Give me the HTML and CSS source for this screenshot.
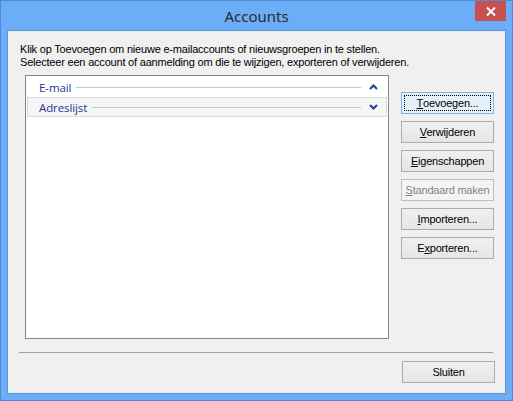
FILE: index.html
```html
<!DOCTYPE html>
<html lang="nl">
<head>
  <meta charset="UTF-8">
  <title>Accounts</title>
  <link rel="stylesheet" href="styles.css">
</head>
<body>
  <div class="window">
    <!-- title bar -->
    <div class="titlebar">
      <span></span>
      <span class="title">Accounts</span>
      <div class="close">
        <svg width="10" height="9" viewBox="0 0 10 9"><path d="M1 0.5 L9 8.5 M9 0.5 L1 8.5" stroke="#fff" stroke-width="2"/></svg>
      </div>
    </div>

    <div class="client">
      <p class="intro">Klik op Toevoegen om nieuwe e-mailaccounts of nieuwsgroepen in te stellen.<br>Selecteer een account of aanmelding om die te wijzigen, exporteren of verwijderen.</p>

      <div class="main">
        <div class="listbox">
          <div class="group">
            <span class="group-name">E-mail</span>
            <span class="group-line"></span>
            <svg class="chevron" width="9" height="6" viewBox="0 0 9 6"><path d="M1 5 L4.5 1.5 L8 5" fill="none" stroke="#1c3f94" stroke-width="2"/></svg>
          </div>
          <div class="group group-hover">
            <span class="group-name">Adreslijst</span>
            <span class="group-line"></span>
            <svg class="chevron" width="9" height="6" viewBox="0 0 9 6"><path d="M1 1 L4.5 4.5 L8 1" fill="none" stroke="#1c3f94" stroke-width="2"/></svg>
          </div>
        </div>

        <div class="buttons">
          <button class="btn btn-default"><span class="focus"><u>T</u>oevoegen...</span></button>
          <button class="btn"><u>V</u>erwijderen</button>
          <button class="btn"><u>E</u>igenschappen</button>
          <button class="btn" disabled><u>S</u>tandaard maken</button>
          <button class="btn"><u>I</u>mporteren...</button>
          <button class="btn">E<u>x</u>porteren...</button>
        </div>
      </div>

      <div class="separator"></div>

      <div class="footer">
        <button class="btn">Sluiten</button>
      </div>
    </div>
  </div>
</body>
</html>
```

FILE: styles.css
```css
body {
  margin: 0;
  font-family: Tahoma, "Liberation Sans", Arial, sans-serif;
  font-size: 11px;
  letter-spacing: -0.2px;
  color: #000;
}

.window {
  width: 513px;
  height: 401px;
  box-sizing: border-box;
  border: 1px solid #4d8ad6;
  background: #6badf6;
  display: flex;
  flex-direction: column;
}

.titlebar {
  height: 29px;
  display: grid;
  grid-template-columns: 1fr auto 1fr;
  align-items: start;
}

.title {
  font-family: "Segoe UI", "Noto Sans", sans-serif;
  font-size: 15px;
  letter-spacing: 0;
  line-height: 30px;
  color: #2b2b2b;
}

.close {
  justify-self: end;
  width: 31px;
  height: 20px;
  margin-right: 6px;
  background: #c75050;
  display: flex;
  align-items: center;
  justify-content: center;
}

.client {
  flex: 1;
  margin: 0 6px 6px 6px;
  border: 1px solid #5b95da;
  background: #f0f0f0;
  padding: 12px 10px 10px 11px;
  display: flex;
  flex-direction: column;
}

.intro {
  margin: 0 0 6px 1px;
  line-height: 13px;
}

.main {
  flex: 1;
  display: flex;
  gap: 12px;
}

.listbox {
  margin-left: 6px;
  width: 364px;
  box-sizing: border-box;
  border: 1px solid #828790;
  background: #fff;
  padding: 1px;
}

.group {
  height: 20px;
  box-sizing: border-box;
  display: flex;
  align-items: center;
  padding: 0 8px 0 11px;
  border: 1px solid transparent;
}

.group-hover {
  background: #f5f5f5;
  border-color: #dcdcdc;
}

.group-name {
  font-family: "Segoe UI", "Open Sans", sans-serif;
  font-size: 11.5px;
  letter-spacing: -0.1px;
  color: #1e3796;
}

.group-line {
  flex: 1;
  height: 1px;
  margin: 1px 8px 0 5px;
  background: #b9c9e6;
}

.group-hover .group-line {
  background: #c2cad9;
}

.buttons {
  padding-top: 17px;
  display: flex;
  flex-direction: column;
  gap: 7px;
}

.btn {
  width: 93px;
  height: 22px;
  padding: 0;
  font-family: inherit;
  font-size: 11px;
  letter-spacing: -0.2px;
  color: #000;
  border: 1px solid #acacac;
  background: linear-gradient(#f0f0f0, #e5e5e5);
}

.btn:disabled {
  color: #838383;
  border-color: #bfbfbf;
  background: #f4f4f4;
}

.btn-default {
  border-color: #7eb4ea;
  background: #e5f1fb;
  padding: 2px;
}

.focus {
  display: flex;
  align-items: center;
  justify-content: center;
  height: 100%;
  box-sizing: border-box;
  border: 1px dotted #000;
}

.separator {
  height: 1px;
  margin: 13px 2px 8px 0;
  background: #a0a0a0;
}

.footer {
  display: flex;
  justify-content: flex-end;
}
```
